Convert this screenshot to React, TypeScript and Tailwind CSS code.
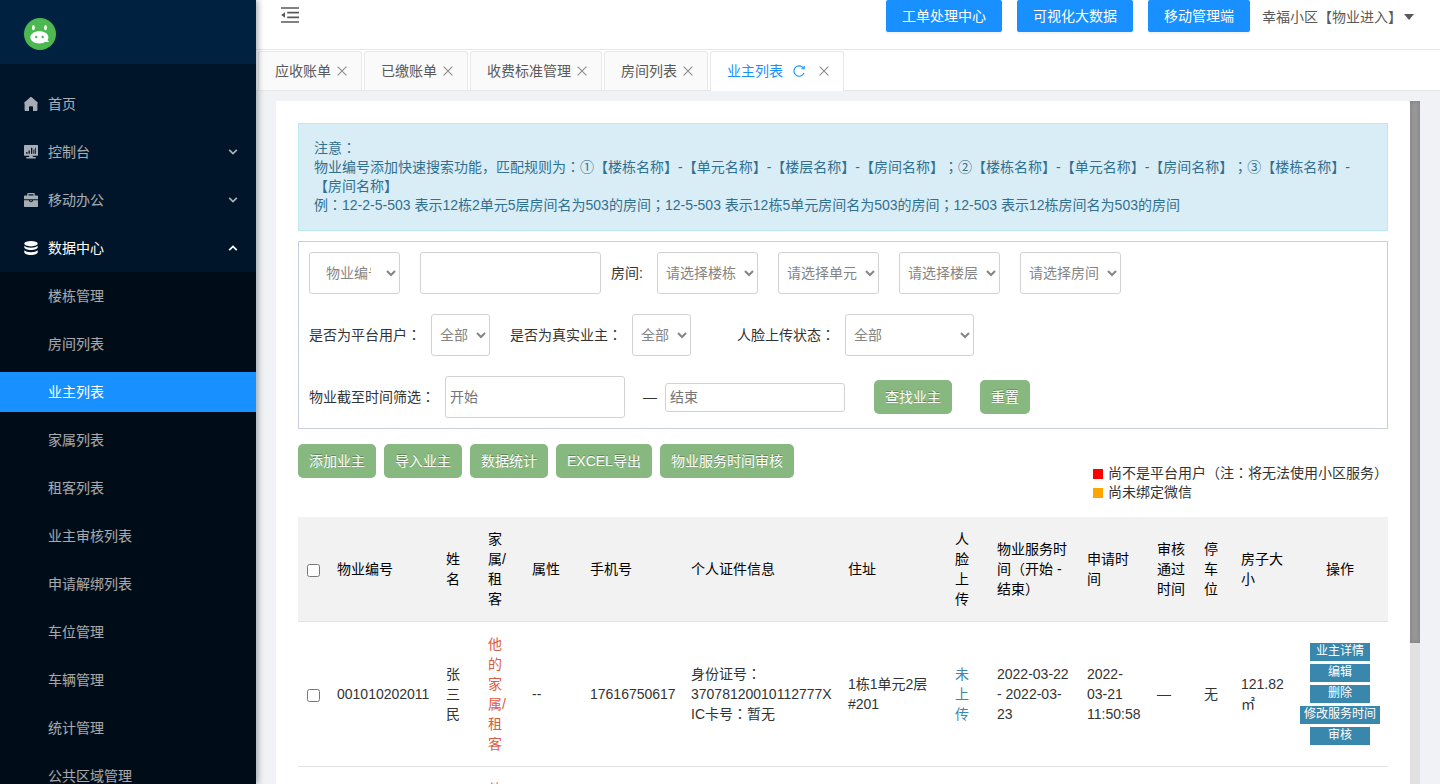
import React from "react";

/** Centres full-width colons and parentheses within their em square. */
function Text({ children }: { children: string }) {
  return (
    <>
      {children.split(/([：；（）])/).map((part, i) =>
        i % 2 ? (
          <span key={i} className="font-['Noto_Sans_CJK_TC','Noto_Sans_CJK_SC',sans-serif] leading-none">
            {part}
          </span>
        ) : (
          part
        ),
      )}
    </>
  );
}

function LogoIcon() {
  return (
    <svg className="size-8" viewBox="0 0 32 32" aria-hidden="true">
      <circle cx="16" cy="16" r="16" fill="#4cb950" />
      <ellipse cx="9.400" cy="9.600" rx="1.400" ry="2.700" fill="#fff" />
      <ellipse cx="21.500" cy="9.600" rx="1.400" ry="2.700" fill="#fff" />
      <path
        d="M15.400 13.200c5.200 0 9 2.600 9 6 0 1.200-.400 2.200-1.100 3.100.5.500 1.200.800 2 1-.900.600-2.300.800-3.800.500-1.700 1.100-3.800 1.700-6.100 1.700-5.200 0-9-2.700-9-6.200s3.800-6.100 9-6.100z"
        fill="#fff"
      />
      <circle cx="12.200" cy="19" r="1.200" fill="#4cb950" />
      <circle cx="18.700" cy="19" r="1.200" fill="#4cb950" />
    </svg>
  );
}

function HomeIcon() {
  return (
    <svg className="size-[14px]" viewBox="0 0 14 14" fill="currentColor" aria-hidden="true">
      <path d="M7 0C6.600 0 6.300.1 6 .4L.3 5.400c-.4.400-.300 1 .300 1V13c0 .6.300 1 .900 1H5V10c0-.5.300-.8.800-.8h2.400c.5 0 .8.300.8.8v4h3.500c.6 0 .900-.400.900-1V6.400c.6 0 .7-.600.300-1L8 .4C7.700.1 7.400 0 7 0z" />
    </svg>
  );
}

function ConsoleIcon() {
  return (
    <svg className="size-[14px]" viewBox="0 0 14 14" fill="currentColor" aria-hidden="true">
      <path
        fillRule="evenodd"
        d="M.5 0h13c.3 0 .5.2.5.5v9.800c0 .3-.2.500-.500.500H8.800v1.300h2.900v1.500H2.300v-1.500h2.900v-1.300H.5c-.3 0-.5-.200-.500-.500V.5C0 .2.200 0 .5 0zM2.200 7v1.800h1.300V7zm2.300-1.400v3.200h1.300V5.600zM7 2.800v6h1.300v-6zm2.400 1.600v4.400h1V4.400zM11 2.800v6h.8v-6z"
      />
    </svg>
  );
}

function BriefcaseIcon() {
  return (
    <svg className="size-[14px]" viewBox="0 0 14 14" fill="currentColor" aria-hidden="true">
      <path
        fillRule="evenodd"
        d="M3.200 2.500V1.200C3.200.500 3.700 0 4.400 0h5.200c.7 0 1.200.5 1.200 1.200v1.300H13c.6 0 1 .4 1 1v2.800H0V3.500c0-.6.400-1 1-1zm1.300 0h5V1.200h-5z"
      />
      <path d="M0 7.300h5c0 1.300.9 2 2 2s2-.7 2-2h5V13c0 .6-.4 1-1 1H1c-.6 0-1-.400-1-1zM6.200 7.300h1.600v1H6.200z" />
    </svg>
  );
}

function DatabaseIcon() {
  return (
    <svg className="size-[14px]" viewBox="0 0 14 14" fill="currentColor" aria-hidden="true">
      <ellipse cx="7" cy="2.700" rx="6.700" ry="2.700" />
      <path d="M.3 4.800C1.500 6 4 6.700 7 6.700S12.500 6 13.700 4.800v1.400C13.700 7.700 10.700 8.900 7 8.900S.3 7.700.3 6.200zM.3 9.300C1.500 10.500 4 11.300 7 11.300s5.500-.8 6.700-2v2C13.700 12.800 10.700 14 7 14S.3 12.800.3 11.300z" />
    </svg>
  );
}

function FoldIcon() {
  return (
    <svg className="h-4 w-[18px]" viewBox="0 0 18 16" fill="#595959" aria-hidden="true">
      <path d="M0 .3h18v1.500H0zM6.200 4.700H18v1.700H6.200zM6.200 9.600H18v1.700H6.200zM0 14.200h18v1.500H0zM4 5.200v5.600L.2 8z" />
    </svg>
  );
}

function Chevron({ up }: { up?: boolean }) {
  return (
    <svg className="h-[6px] w-[10px]" viewBox="0 0 10 6" fill="none" stroke="currentColor" strokeWidth="1.8" aria-hidden="true">
      {up ? <path d="M1.200 5.200 5 1.400l3.800 3.800" /> : <path d="M1.200.8 5 4.600 8.800.8" />}
    </svg>
  );
}

function CloseIcon() {
  return (
    <svg className="size-[10px]" viewBox="0 0 10 10" stroke="#8c8c8c" strokeWidth="1.100" aria-hidden="true">
      <path d="M.6.6l8.800 8.800M9.400.6.6 9.400" />
    </svg>
  );
}

function ReloadIcon() {
  return (
    <svg className="size-3" viewBox="0 0 12 12" fill="none" stroke="#1890ff" strokeWidth="1.100" aria-hidden="true">
      <path d="M10.400 3A5.200 5.200 0 1 0 11 8M11.200 1v2.800H8.400" />
    </svg>
  );
}

const topMenu = [
  { label: "首页", icon: <HomeIcon />, arrow: false },
  { label: "控制台", icon: <ConsoleIcon />, arrow: true },
  { label: "移动办公", icon: <BriefcaseIcon />, arrow: true },
];

const subMenu = [
  "楼栋管理",
  "房间列表",
  "业主列表",
  "家属列表",
  "租客列表",
  "业主审核列表",
  "申请解绑列表",
  "车位管理",
  "车辆管理",
  "统计管理",
  "公共区域管理",
];

function Sidebar() {
  return (
    <aside className="relative z-10 w-64 shrink-0 overflow-hidden bg-[#001529] text-white/65 shadow-[2px_0_6px_rgba(0,21,41,0.35)]">
      <div className="flex h-16 items-center bg-[#002140] px-6 pt-1">
        <LogoIcon />
      </div>
      <nav className="pt-4">
        {topMenu.map((item) => (
          <a key={item.label} href="#" className="flex h-12 items-center gap-[10px] pl-6 pr-[18px]">
            {item.icon}
            <span className="flex-1">{item.label}</span>
            {item.arrow && <Chevron />}
          </a>
        ))}
        <a href="#" className="flex h-12 items-center gap-[10px] pl-6 pr-[18px] text-white">
          <DatabaseIcon />
          <span className="flex-1">数据中心</span>
          <Chevron up />
        </a>
        <ul className="flex flex-col gap-2 bg-[#000c17] py-1">
          {subMenu.map((label) => (
            <li key={label}>
              <a
                href="#"
                className={
                  label === "业主列表"
                    ? "flex h-10 items-center bg-[#1890ff] pl-12 text-white"
                    : "flex h-10 items-center pl-12"
                }
              >
                {label}
              </a>
            </li>
          ))}
        </ul>
      </nav>
    </aside>
  );
}

function Header() {
  return (
    <header className="flex h-[50px] shrink-0 items-start border-b border-[#e4e6e8] bg-white pl-[25px] pr-[26px]">
      <button type="button" aria-label="收起菜单" className="pt-[7px]">
        <FoldIcon />
      </button>
      <div className="ml-auto flex items-start gap-[15px]">
        {["工单处理中心", "可视化大数据", "移动管理端"].map((label) => (
          <button
            key={label}
            type="button"
            className="h-8 rounded-[2px] bg-[#1890ff] px-4 text-white shadow-[0_2px_0_rgba(0,0,0,0.045)]"
          >
            {label}
          </button>
        ))}
      </div>
      <button type="button" className="ml-3 flex h-[34px] items-center gap-[2px] text-[#595959]">
        幸福小区【物业进入】
        <svg className="h-[6px] w-[10px]" viewBox="0 0 10 6" fill="currentColor" aria-hidden="true">
          <path d="M0 0h10L5 6z" />
        </svg>
      </button>
    </header>
  );
}

function TabBar() {
  return (
    <div className="flex h-[41px] shrink-0 gap-[2px] border-b border-[#e4e6e8] bg-white pl-[2px] pt-px">
      {["应收账单", "已缴账单", "收费标准管理", "房间列表"].map((label) => (
        <div
          key={label}
          className="flex items-center gap-[6px] rounded-t-[3px] border border-b-0 border-[#e8e8e8] bg-[#fafafa] pl-4 pr-[14px] text-[#595959]"
        >
          <a href="#">{label}</a>
          <button type="button" aria-label={"关闭" + label}>
            <CloseIcon />
          </button>
        </div>
      ))}
      <div className="-mb-px flex items-center rounded-t-[3px] border border-b-0 border-[#e8e8e8] bg-white pb-px pl-4 pr-[14px]">
        <a href="#" className="text-[#1890ff]">
          业主列表
        </a>
        <button type="button" aria-label="刷新" className="ml-[10px]">
          <ReloadIcon />
        </button>
        <button type="button" aria-label="关闭业主列表" className="ml-[14px]">
          <CloseIcon />
        </button>
      </div>
    </div>
  );
}

const fieldBase = "rounded-[3px] border border-[#d2d2d2] bg-white";
const selectBase = fieldBase + " h-[42px] text-[#858585]";

function FilterPanel() {
  return (
    <form className="mt-[10px] flex flex-col gap-5 border border-[#c5d0dc] p-[10px]">
      <div className="flex items-center">
        <select aria-label="搜索类型" className={selectBase + " w-[91px] pl-3 pr-3"}>
          <option>物业编号</option>
        </select>
        <input aria-label="搜索内容" className={fieldBase + " ml-5 h-[42px] w-[181px] px-1"} />
        <label htmlFor="building" className="ml-[10px] w-9">
          房间:
        </label>
        <div className="ml-[10px] flex gap-5">
          <select id="building" className={selectBase + " w-[101px] px-1"}>
            <option>请选择楼栋</option>
          </select>
          <select aria-label="单元" className={selectBase + " w-[101px] px-1"}>
            <option>请选择单元</option>
          </select>
          <select aria-label="楼层" className={selectBase + " w-[101px] px-1"}>
            <option>请选择楼层</option>
          </select>
          <select aria-label="房间" className={selectBase + " w-[101px] px-1"}>
            <option>请选择房间</option>
          </select>
        </div>
      </div>
      <div className="flex items-center">
        <label htmlFor="platform">
          <Text>是否为平台用户：</Text>
        </label>
        <select id="platform" className={selectBase + " ml-[10px] w-[59px] px-1"}>
          <option>全部</option>
        </select>
        <label htmlFor="real" className="ml-5">
          <Text>是否为真实业主：</Text>
        </label>
        <select id="real" className={selectBase + " ml-[10px] w-[59px] px-1"}>
          <option>全部</option>
        </select>
        <label htmlFor="face" className="ml-[46px]">
          <Text>人脸上传状态：</Text>
        </label>
        <select id="face" className={selectBase + " ml-[10px] w-[129px] px-1"}>
          <option>全部</option>
        </select>
      </div>
      <div className="flex items-center">
        <label htmlFor="from">
          <Text>物业截至时间筛选：</Text>
        </label>
        <input
          id="from"
          placeholder="开始"
          className={fieldBase + " ml-[10px] h-[42px] w-[180px] px-1 placeholder:text-[#757575]"}
        />
        <span className="ml-[18px]">—</span>
        <input
          aria-label="结束"
          placeholder="结束"
          className={fieldBase + " ml-2 h-[29px] w-[180px] px-1 placeholder:text-[#757575]"}
        />
        <GreenButton label="查找业主" className="ml-[29px]" />
        <GreenButton label="重置" className="ml-7" />
      </div>
    </form>
  );
}

function GreenButton({ label, className = "" }: { label: string; className?: string }) {
  return (
    <button
      type="button"
      className={
        "h-[34px] rounded-[5px] bg-[#87b87f] px-[11px] text-white [text-shadow:0_-1px_0_rgba(0,0,0,0.25)] " + className
      }
    >
      {label}
    </button>
  );
}

const headers = [
  "物业编号",
  "姓名",
  "家属/租客",
  "属性",
  "手机号",
  "个人证件信息",
  "住址",
  "人脸上传",
  "物业服务时间（开始 - 结束）",
  "申请时间",
  "审核通过时间",
  "停车位",
  "房子大小",
];

function OwnerTable() {
  return (
    <table className="mt-[15px] w-full table-fixed text-left leading-5">
      <colgroup>
        <col className="w-[31px]" />
        <col className="w-[109px]" />
        <col className="w-[42px]" />
        <col className="w-[44px]" />
        <col className="w-[58px]" />
        <col className="w-[101px]" />
        <col className="w-[157px]" />
        <col className="w-[107px]" />
        <col className="w-[42px]" />
        <col className="w-[90px]" />
        <col className="w-[70px]" />
        <col className="w-[47px]" />
        <col className="w-[37px]" />
        <col className="w-[59px]" />
        <col className="w-[96px]" />
      </colgroup>
      <thead>
        <tr className="border-b border-[#e2e2e2] bg-[#f2f2f2] text-black [&>th]:py-3 [&>th]:font-normal">
          <th className="text-center">
            <input type="checkbox" aria-label="全选" className="size-[13px] align-middle" />
          </th>
          {headers.map((h) => (
            <th key={h} className={h === "家属/租客" ? "pl-2 pr-4" : "px-2"}>
              <Text>{h}</Text>
            </th>
          ))}
          <th className="text-center">操作</th>
        </tr>
      </thead>
      <tbody className="[&_td]:py-3">
        <tr className="border-b border-[#e2e2e2]">
          <td className="text-center">
            <input type="checkbox" aria-label="选择 001010202011" className="size-[13px] align-middle" />
          </td>
          <td className="px-2">001010202011</td>
          <td className="px-2">张三民</td>
          <td className="pl-2 pr-4">
            <a href="#" className="text-[#dd5a43]">
              他的家属/租客
            </a>
          </td>
          <td className="px-2">--</td>
          <td className="px-2">17616750617</td>
          <td className="px-2">
            <p>
              <Text>身份证号：</Text>
            </p>
            <p>37078120010112777X</p>
            <p>
              <Text>IC卡号：暂无</Text>
            </p>
          </td>
          <td className="px-2">1栋1单元2层 #201</td>
          <td className="px-2">
            <a href="#" className="text-[#3a87ad]">
              未上传
            </a>
          </td>
          <td className="px-2">2022-03-22 - 2022-03-23</td>
          <td className="px-2">2022-03-21 11:50:58</td>
          <td className="px-2">—</td>
          <td className="px-2">无</td>
          <td className="px-2">121.82 ㎡</td>
          <td>
            <div className="flex flex-col items-center gap-[3px] text-xs leading-[16px] text-white">
              {["业主详情", "编辑", "删除", "修改服务时间", "审核"].map((label) => (
                <button key={label} type="button" className="h-[18px] min-w-[60px] bg-[#3a87ad] px-1 pb-[2px]">
                  {label}
                </button>
              ))}
            </div>
          </td>
        </tr>
        <tr className="border-b border-[#e2e2e2]">
          <td colSpan={3} />
          <td className="pl-2 pr-4">
            <a href="#" className="text-[#dd5a43]">
              他的家属/租客
            </a>
          </td>
          <td colSpan={11} />
        </tr>
      </tbody>
    </table>
  );
}

export default function App() {
  return (
    <div className="flex h-screen overflow-hidden bg-[#f0f2f5] font-['Liberation_Sans','Noto_Sans_CJK_SC',sans-serif] text-sm text-[#333] [text-spacing-trim:space-all]">
      <Sidebar />
      <div className="flex min-w-0 flex-1 flex-col">
        <Header />
        <TabBar />
        <div className="mt-[10px] flex min-h-0 flex-1 px-5">
          <main className="min-w-0 flex-1 overflow-hidden bg-white p-[22px]">
            <div className="border border-[#bce8f1] bg-[#d9edf7] p-[15px] leading-[19px] text-[#31708f]">
              <p>
                <Text>注意：</Text>
              </p>
              <p>
                <Text>
                  物业编号添加快速搜索功能，匹配规则为：①【楼栋名称】-【单元名称】-【楼层名称】-【房间名称】；②【楼栋名称】-【单元名称】-【房间名称】；③【楼栋名称】-【房间名称】
                </Text>
              </p>
              <p>
                <Text>
                  例：12-2-5-503 表示12栋2单元5层房间名为503的房间；12-5-503 表示12栋5单元房间名为503的房间；12-503 表示12栋房间名为503的房间
                </Text>
              </p>
            </div>
            <FilterPanel />
            <div className="mt-[15px] flex items-start justify-between">
              <div className="flex gap-2">
                {["添加业主", "导入业主", "数据统计", "EXCEL导出", "物业服务时间审核"].map((label) => (
                  <GreenButton key={label} label={label} />
                ))}
              </div>
              <ul className="pt-5 leading-[19px]">
                <li className="flex items-center gap-[5px]">
                  <span className="size-[10px] bg-[#ff0000]" />
                  <span>
                    <Text>尚不是平台用户（注：将无法使用小区服务）</Text>
                  </span>
                </li>
                <li className="flex items-center gap-[5px]">
                  <span className="size-[10px] bg-[#ffa500]" />
                  <span>尚未绑定微信</span>
                </li>
              </ul>
            </div>
            <OwnerTable />
          </main>
          <div className="w-[10px] shrink-0 bg-[#e1e1e1]" aria-hidden="true">
            <div className="h-[79.4%] bg-[#999] shadow-[inset_0_0_5px_rgba(0,0,0,0.2)]" />
          </div>
        </div>
      </div>
    </div>
  );
}
